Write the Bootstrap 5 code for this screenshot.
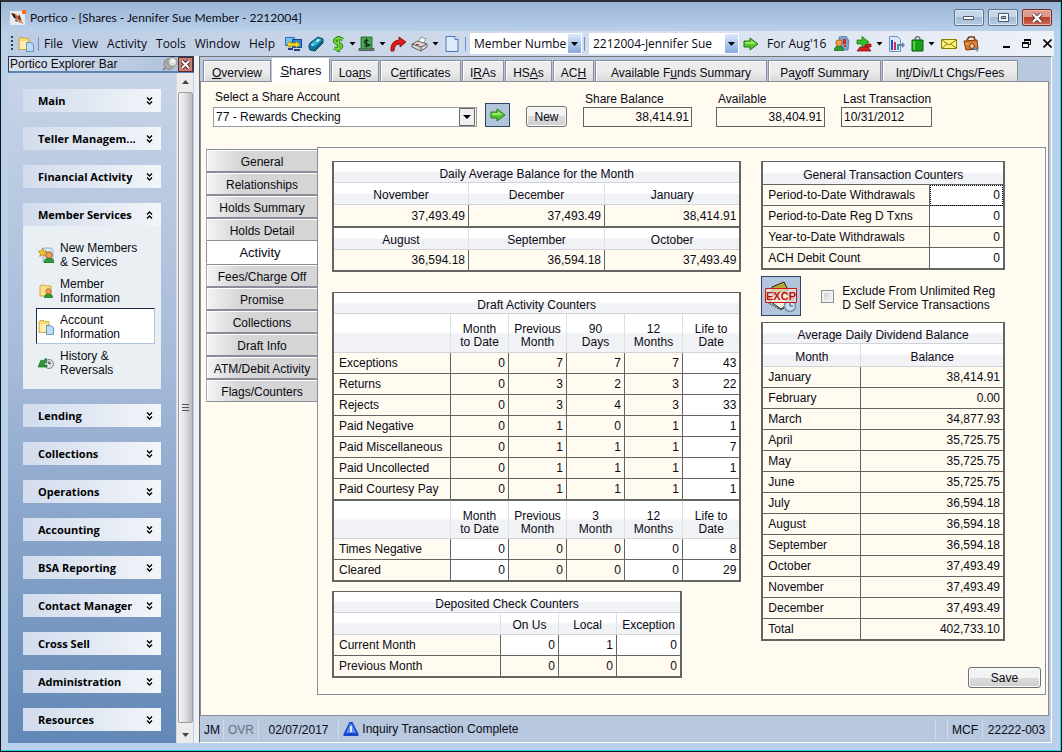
<!DOCTYPE html>
<html lang="en">
<head>
<meta charset="utf-8">
<meta name="viewport" content="width=device-width, initial-scale=1">
<title>Portico - Shares</title>
<link href="https://cdn.jsdelivr.net/npm/bootstrap@5.3.0/dist/css/bootstrap.min.css" rel="stylesheet">
<style>
:root{--ink:#0a0a14;--cream:#fffbf0;--line:#8a8d99;--grid:#646464;--steel:#b7c8df}
body{font:12px/14px "Liberation Sans",Arial,sans-serif;color:var(--ink);background:#b9d1ea}
button,input,select{font:inherit;color:inherit}
svg{display:block;flex:none}
a{color:inherit;text-decoration:none}
.frame{min-height:100vh;border:1px solid #111;border-top:2px solid #2b2f36;box-shadow:inset -1px -1px #2fd0ee;background:linear-gradient(#9ab5d5,#bad1eb 30px,#b9d1ea);padding:0 7px 8px 7px}
.ui{font-family:"Open Sans","Segoe UI",sans-serif}
.titlebar{height:29px;padding:2px 2px 0 2px;font:12px/14px Lato,"Segoe UI",sans-serif}
.capbtn{width:30px;height:17px;border:1px solid #5c7390;border-radius:2px;background:linear-gradient(#c6d7ea 50%,#a3bad3 50%,#b7cde4);box-shadow:inset 0 0 0 1px #dce8f4;padding:0;display:flex;align-items:center;justify-content:center}
.capbtn.shut{background:linear-gradient(#dc9b8c 50%,#b8402c 50%,#cd6b55);border-color:#6e2e2a;box-shadow:inset 0 0 0 1px #e9b5a8}
.toolbar{height:25px;background:linear-gradient(90deg,#bccce4,#d5deed 60%,#eef1f8);padding:0 2px 0 3px}
.toolbar button,.toolbar a{background:none;border:0;padding:0;white-space:nowrap}
.menus{width:231px;margin-left:5px}
.tools{margin-left:10px}
.g6{margin-left:6px}.g2{margin-left:2px}
.acts{gap:6px}
.rule{width:1px;height:14px;background:#6a93cc}
.tsel{height:21px;border:0;border-radius:0;appearance:none;padding:0 4px;background:#fff url("data:image/svg+xml,%3Csvg xmlns='http://www.w3.org/2000/svg' width='15' height='21'%3E%3Cdefs%3E%3ClinearGradient id='g' x2='0' y2='1'%3E%3Cstop stop-color='%23dbe8fa'/%3E%3Cstop offset='1' stop-color='%2386a9e0'/%3E%3C/linearGradient%3E%3C/defs%3E%3Cpath fill='url(%23g)' d='M1 1h13v19H1z'/%3E%3Cpath d='M4 9h7l-3.500 4z'/%3E%3C/svg%3E") right center no-repeat}
.w112{width:112px}.w150{width:150px}
.caret{width:7px}
.side{width:186px;flex:none}
.sidehead{height:17px;border:1px solid #2c3e58;border-bottom:2px solid #5b82b4;background:linear-gradient(90deg,#dbe2ec,#a9bfd9);padding-left:1px;font-size:12px}
.pane{width:168px;background:linear-gradient(#c7d4e8,#a5b9d8 45%,#6288b6);padding:16px 15px 11px;gap:15px}
.grp{width:138px}
.grphead{height:23px;width:100%;border:0;background:linear-gradient(90deg,#d2dced,#f2f5f9);padding:0 8px 0 15px;font:bold 11px/14px "Open Sans",Tahoma,sans-serif;color:#000}
.grpbody{background:#e9eff3;padding:10px 6px 9px 13px}
.grpitem{height:36px;border:1px solid transparent;padding:1px 0 0 1px;gap:6px}
.grpitem.on{background:#fff;border:1px solid #b2c3e0;border-top-color:#1c2b45;border-left-color:#1c2b45}
.sbar{width:17px;background:#ececec;border-left:1px solid #d8dce2}
.thumb{width:15px;border:1px solid #9a9da2;border-radius:2px;background:linear-gradient(90deg,#f5f5f5,#dcdcdf 55%,#b9b9bf)}
.split{width:5px;flex:none;background:#f0f0f0}
.work{border-left:1px solid #6c6c6c;border-top:1px solid #77777a;background:var(--steel);margin-right:2px;border-bottom:1px solid #fff;border-right:1px solid #fff;min-width:0}
.tabs{padding-left:3px;gap:1px;height:25px;position:relative}
.tab{height:21px;border:1px solid var(--line);border-bottom:0;background:linear-gradient(#ececec 50%,#d9d9d9);box-shadow:inset 1px 1px #fff;padding:3px 0 0;margin-bottom:1px;text-align:center;white-space:nowrap}
.tab.on{height:24px;background:#fff;border-top-color:#fff;border-left-color:#fff;padding-top:1px;margin-bottom:0;font-size:13px}
.sheet{background:var(--cream);border:1px solid var(--line);padding:8px 2px 20px 0;margin:-1px 2px 0 0}
.formrow{padding-left:12px}
.lower{padding-top:20px}
.asel{width:264px;height:20px;border:1px solid #9a9a9a;border-radius:0;appearance:none;padding:0 2px;background:#fff url("data:image/svg+xml,%3Csvg xmlns='http://www.w3.org/2000/svg' width='17' height='18'%3E%3Cpath fill='%23f0f0f0' stroke='%23666' d='M.5.5h15v17H.5z'/%3E%3Cpath d='M4 7h8l-4 4z'/%3E%3C/svg%3E") right center no-repeat}
.lbl{height:15px;display:block;padding-left:2px}
.lbl.high{height:17px}
.box{display:block;height:20px;border:1px solid var(--grid);border-radius:0;background:var(--cream);padding:0 2px;text-align:right}
.w109{width:109px}.w91{width:91px}
.btnx{border:1px solid #707070;border-radius:3px;background:linear-gradient(#f3f3f3 50%,#dcdcdc 50%,#cfcfcf);box-shadow:inset 0 0 0 1px #fafafa;padding:1px 0 0;height:21px;font-size:12px;text-align:center}
.sq{border:1px solid #2c4468;background:#b3c5dd;padding:0;display:flex;align-items:center;justify-content:center}
.vtabs{width:111px;margin:2px 0 0 5px}
.vtab{height:23px;width:100%;border:0;border-top:1px solid var(--line);border-bottom:1px solid var(--line);border-left:1px solid #a6a8b2;background:linear-gradient(90deg,#f4f4f4,#d5d5d5 30%);box-shadow:inset 1px 1px #fff;padding:3px 0 0;text-align:center;white-space:nowrap}
.vtab.on{background:#fff;border-color:#fff;border-left-color:var(--line);font-size:13px;padding:0 4px 0 0}
.panelx{border:1px solid var(--line);padding:13px 4px 5px 14px;display:grid;grid-template-columns:minmax(0,430fr) minmax(0,244fr) 36px;grid-template-rows:auto 1fr}
.leftcol{grid-row:1 / span 2;padding-right:20px}
.saverow{grid-column:2 / span 2;margin-top:26px}
table.gridx{width:100%;table-layout:fixed;border-collapse:separate;border-spacing:0;border:2px solid var(--grid);border-top-width:1px;background:var(--cream)}
.gridx th{font-weight:400;text-align:center;height:22px;padding:4px 0 0;background:linear-gradient(#fff 45%,#f0f1f4 55%,#f2f3f6);border-bottom:1px solid #d2d3d7;border-right:1px solid #dfe0e4;line-height:13px}
.gridx .cap th{height:21px}
.gridx .cap.dark th{height:23px;border-bottom-color:var(--grid)}
.gridx .hd th{height:23px}
.gridx .tall th{height:38px;padding-top:6px}
.gridx .tall.first th{height:39px}
.gridx td{height:21px;padding:0 3px 0 0;text-align:right;border-right:1px solid var(--grid);border-bottom:1px solid var(--grid);background:var(--cream);line-height:14px}
.gridx .name{text-align:left;padding-left:5px;white-space:nowrap}
.gridx tr>:last-child{border-right:0}
.gridx tr.mid>*{height:22px;border-bottom:2px solid var(--grid)}
.gridx tbody tr.end>*{height:20px;border-bottom:0}
.gridx td.w{background:#fff}
.gridx td.focus{outline:1px dotted #000;outline-offset:-1px}
.gridx tr.mid>td.v{height:23px}
.c117{width:117px}.c58{width:58px}.c167{width:167px}.c98{width:98px}.c135{width:135px}.c136{width:136px}
.draft{margin:20px 0 9px}
.dep{width:350px}
.excp{margin:6px 0;gap:20px}
.chk{width:13px;height:13px;appearance:none;border:1px solid #8c8f94;background:linear-gradient(135deg,#c9ced3,#f8f8f8);box-shadow:inset 0 0 0 2px #f2f2f2;margin:6px 0 0;flex:none}
.status{height:26px}
.status>span{border-right:1px solid #d3dce8;height:20px;padding-top:4px;white-space:nowrap;flex:none}
.status .msg{border:0;padding:0 0 0 4px;flex:1 1 auto}
</style>
</head>
<body>
<svg width="0" height="0" class="position-absolute" aria-hidden="true">
<symbol id="dn" viewBox="0 0 7 8"><path d="M1 .5l2.500 2.500L6 .5M1 4.500L3.500 7 6 4.500" fill="none" stroke="#000" stroke-width="1.400"/></symbol>
<symbol id="up" viewBox="0 0 7 8"><path d="M1 3.500L3.500 1 6 3.500M1 7.500L3.500 5 6 7.500" fill="none" stroke="#000" stroke-width="1.400"/></symbol>
<symbol id="ct" viewBox="0 0 7 4"><path d="M.5 0h6l-3 3.500z"/></symbol>
<symbol id="folder" viewBox="0 0 16 16"><path d="M1 2.500l1-1h4l1 1h4v4h1v7H1z" fill="#f5d978" stroke="#c79c31" stroke-width=".8"/><path d="M2 5h7v8H2z" fill="#fdeeae"/><path d="M8.500 6.500h4l3 2v7h-7z" fill="#b9dcfa" stroke="#527fae" stroke-width=".8"/></symbol>
<symbol id="go" viewBox="0 0 16 14"><path d="M1 4h6V1l8 6-8 6v-3H1z" fill="#57c52c" stroke="#247a12"/><path d="M2 5h6V3l5 4H2z" fill="#9ae66a"/></symbol>
<symbol id="person" viewBox="0 0 10 12"><path d="M0 12q0-5 5-5t5 5z" fill="#2f9a36" stroke="#14601c" stroke-width=".6"/><circle cx="5" cy="4" r="3.200" fill="#f0a04a" stroke="#8a4a12" stroke-width=".7"/></symbol>
</svg>

<div class="frame d-flex flex-column">
<header class="titlebar d-flex align-items-center">
  <svg width="16" height="16" viewBox="0 0 16 16"><path d="M0 1h15v14H0z" fill="#e8eaec"/><path d="M1 3l4 1 2 5-3-1z" fill="#222"/><path d="M4 3l4 3 2 4 4 4-5-2-3-4z" fill="#d9622b"/><path d="M9 4l3 7-4-3z" fill="#333"/><path d="M6 9l2 3-3-1z" fill="#444"/><path d="M12 0h4v4h-4z" fill="#ff6a1e"/></svg>
  <span class="ms-1">Portico - [Shares - Jennifer Sue Member - 2212004]</span>
  <div class="ms-auto d-flex gap-1">
    <button class="capbtn" aria-label="Minimize"><svg width="12" height="6"><path d="M.5 1.500h10v3H.5z" fill="#fff" stroke="#4a5568"/></svg></button>
    <button class="capbtn" aria-label="Restore"><svg width="11" height="9"><path d="M1.500 1.500h8v6h-8z" fill="none" stroke="#fff" stroke-width="2"/><path d="M.5.5h10v8H.5zM3.500 3.500h4v2h-4z" fill="none" stroke="#4a5568"/></svg></button>
    <button class="capbtn shut" aria-label="Close"><svg width="12" height="10" viewBox="0 0 12 10"><path d="M2 1l8 8M10 1L2 9" stroke="#5b3438" stroke-width="4"/><path d="M2 1l8 8M10 1L2 9" stroke="#fff" stroke-width="2.300"/></svg></button>
  </div>
</header>

<nav class="toolbar d-flex align-items-center ui" aria-label="Main menu">
  <svg width="3" height="15"><path d="M0 0h2v2H0zM0 4h2v2H0zM0 8h2v2H0zM0 12h2v2H0z" fill="#2b3f63"/></svg>
  <svg class="ms-1" width="16" height="16"><use href="#folder"/></svg>
  <span class="rule ms-1"></span>
  <div class="menus d-flex justify-content-between"><a href="#">File</a><a href="#">View</a><a href="#">Activity</a><a href="#">Tools</a><a href="#">Window</a><a href="#">Help</a></div>
  <div class="tools d-flex align-items-center">
    <button aria-label="Computers"><svg width="17" height="16" viewBox="0 0 17 16"><path d="M.5 1.500h9v8h-9z" fill="#6cc6f5" stroke="#2b6cb8"/><path d="M7.500 3.500h9v8h-9z" fill="#2d86dc" stroke="#17418d"/><path d="M3 12h5v2H3zM9 13h6v2H9z" fill="#27407c"/><path d="M2 8l3-3v2h6V5l4 3.500L11 12v-2H5v2z" fill="#f7d720" stroke="#9b7b00" stroke-width=".6"/></svg></button>
    <button class="g6" aria-label="Scanner"><svg width="16" height="16" viewBox="0 0 16 16"><path d="M.8 10.500L2 7l8-6 5 2v4l-8 8-5-1z" fill="#1578a0" stroke="#0b4660"/><path d="M2 8.500L10 2l3.500 1.500L7 10z" fill="#35b4d8"/><path d="M8 5l2-2 2 1-2 2zM3 9l2-1 1 1-2 1z" fill="#c9f1fa"/><path d="M6 14l8-8" stroke="#0b4660"/></svg></button>
    <button class="ms-2 d-flex align-items-center gap-1" aria-label="Money"><svg width="13" height="16" viewBox="0 0 13 16"><path d="M11 3.500Q6 1 3.500 3.500T6 7.500t3 4T2 12M6.500 0v16" fill="none" stroke="#2b8a0c" stroke-width="3.400"/><path d="M11 3.500Q6 1 3.500 3.500T6 7.500t3 4T2 12M6.500 1v14" fill="none" stroke="#7ad83c" stroke-width="1.600"/></svg><svg class="caret" height="4"><use href="#ct"/></svg></button>
    <button class="g2 d-flex align-items-center gap-1" aria-label="Cash"><svg width="17" height="16" viewBox="0 0 17 16"><path d="M1 12.500h15v2H1z" fill="#8d9499" stroke="#333" stroke-width=".7"/><path d="M3 1h11v12H3z" fill="#4aa653" stroke="#1d5a26" stroke-width=".8"/><path d="M10.500 4.500Q6.500 3.500 6.500 5.500t4 3-4 1.500M8.500 2.500v9" fill="none" stroke="#0c2c10" stroke-width="1.200"/></svg><svg class="caret" height="4"><use href="#ct"/></svg></button>
    <button class="ms-1" aria-label="Forward"><svg width="17" height="16" viewBox="0 0 17 16"><path d="M1 15Q0 5 9 4V1l7 5-6 5V8Q4 8 4 15z" fill="#e01818" stroke="#7d0808" stroke-width=".8"/></svg></button>
    <button class="ms-1 d-flex align-items-center gap-1" aria-label="Print"><svg width="17" height="16" viewBox="0 0 17 16"><path d="M7 6l3-5 5 2-3 5z" fill="#fff" stroke="#666" stroke-width=".7"/><path d="M1 8l6-3 9 3v3l-6 4-9-4z" fill="#d8d8d8" stroke="#444" stroke-width=".8"/><path d="M1 8l9 3v4M10 11l6-3" stroke="#555" fill="none"/><path d="M5 8h3v1H5z" fill="#e02020"/></svg><svg class="caret" height="4"><use href="#ct"/></svg></button>
    <button class="g6" aria-label="New document"><svg width="14" height="16" viewBox="0 0 14 16"><path d="M1 .5h9l3 3v12H1z" fill="#dcecfd" stroke="#4a78b5"/><path d="M10 .5v3h3" fill="#fff" stroke="#4a78b5"/></svg></button>
  </div>
  <span class="rule g6 me-1"></span>
  <select class="tsel w112" aria-label="Search by"><option>Member Numbe</option></select>
  <span class="rule g2 me-1"></span>
  <select class="tsel w150" aria-label="Member"><option>2212004-Jennifer Sue</option></select>
  <button class="ms-1 d-flex align-items-center gap-2"><svg width="16" height="14"><use href="#go"/></svg>For Aug'16</button>
  <div class="acts d-flex align-items-center ms-auto">
    <button aria-label="Member notes"><svg width="16" height="16" viewBox="0 0 16 16"><path d="M5 1l7-1 3 5-1 9H7z" fill="#7aa7cf" stroke="#476c94" stroke-width=".7"/><path d="M9 3h3v5H9zM10 9h2v2h-2z" fill="#d82424"/><use href="#person" x="0" y="3" width="10" height="12"/></svg></button>
    <button class="d-flex align-items-center gap-1" aria-label="Transfer"><svg width="16" height="16" viewBox="0 0 16 16"><path d="M1 15l3-4h8l3 4z" fill="#d82020" stroke="#7a0c0c" stroke-width=".7"/><path d="M7 8h8v3H9z" fill="#d82020" stroke="#7a0c0c" stroke-width=".7"/><path d="M1 4h5V.5L13 6l-7 5.500V8H1z" fill="#35c128" stroke="#116a10" stroke-width=".7"/></svg><svg class="caret" height="4"><use href="#ct"/></svg></button>
    <button aria-label="Reports"><svg width="16" height="16" viewBox="0 0 16 16"><path d="M.5.5h8l3 3v12H.5z" fill="#d8e8fa" stroke="#6d93c4"/><path d="M2 4h2v10H2z" fill="#2849c8"/><path d="M5 6h2v8H5z" fill="#d82860"/><path d="M8 8h2v6H8z" fill="#28a0a0"/><path d="M10 8h3V6l3 3-3 3v-2h-3z" fill="#6c7fa8"/></svg></button>
    <button class="d-flex align-items-center gap-1" aria-label="Deposit bag"><svg width="13" height="16" viewBox="0 0 13 16"><path d="M4 4Q4 .5 6.500.5T9 4" fill="none" stroke="#777" stroke-width="1.500"/><path d="M1 4h11v11H1z" fill="#18a018" stroke="#0a5a0a"/><path d="M2 5h2v9H2z" fill="#55cf45"/></svg><svg class="caret" height="4"><use href="#ct"/></svg></button>
    <button aria-label="Mail"><svg width="16" height="12" viewBox="0 0 16 12"><path d="M.5 1.500h15v9H.5z" fill="#fff27c" stroke="#8a7a00"/><path d="M1 2l7 5 7-5M1 10l5-4M15 10l-5-4" fill="none" stroke="#8a7a00"/></svg></button>
    <button aria-label="Briefcase"><svg width="16" height="16" viewBox="0 0 16 16"><path d="M4 4l2-3h5l1 3" fill="none" stroke="#7a3c08" stroke-width="1.600"/><path d="M1 5l13-1 1 9-12 1z" fill="#d8782a" stroke="#7a3c08"/><path d="M2 8h12" stroke="#f4b068"/><circle cx="9" cy="10" r="2.500" fill="#f4c48c" stroke="#7a3c08"/><path d="M11 12l4 3" stroke="#4c9ae0" stroke-width="2"/></svg></button>
  </div>
  <div class="d-flex align-items-center gap-2 ms-4">
    <button aria-label="Minimize sheet"><svg width="7" height="10"><path d="M0 7h7v2H0z"/></svg></button>
    <button class="ms-1" aria-label="Restore sheet"><svg width="9" height="9"><path d="M2.500 2.500v-2h6v5h-2M.5 3.500h6v5h-6z" fill="none" stroke="#000"/><path d="M2 0h7v2H2zM0 3h7v2H0z"/></svg></button>
    <button class="ms-1" aria-label="Close sheet"><svg width="9" height="9"><path d="M.5.5l8 8M8.500.5l-8 8" stroke="#000" stroke-width="1.600"/></svg></button>
  </div>
</nav>

<div class="d-flex flex-grow-1">
<aside class="side d-flex flex-column">
  <div class="sidehead d-flex align-items-center">Portico Explorer Bar
    <svg class="ms-auto" width="16" height="14" viewBox="0 0 16 14"><path d="M1 13l5-5" stroke="#777" stroke-width="1.500"/><ellipse cx="7" cy="7" rx="5" ry="5.500" fill="#aaa" stroke="#888"/><circle cx="10.500" cy="5" r="4.500" fill="#d9d9d9" stroke="#8d8d8d"/><circle cx="11" cy="4" r="2" fill="#f6f6f6"/></svg>
    <svg width="15" height="15" viewBox="0 0 15 15"><path d="M.5.5h14v14H.5z" fill="#c98078" stroke="#5c2a2a"/><path d="M4 4l7 7M11 4l-7 7" stroke="#50282c" stroke-width="4"/><path d="M4 4l7 7M11 4l-7 7" stroke="#fff" stroke-width="2"/></svg>
  </div>
  <div class="d-flex flex-grow-1">
    <div class="pane d-flex flex-column">
      <div class="grp"><button class="grphead d-flex align-items-center justify-content-between">Main<svg width="7" height="8"><use href="#dn"/></svg></button></div>
      <div class="grp"><button class="grphead d-flex align-items-center justify-content-between">Teller Managem...<svg width="7" height="8"><use href="#dn"/></svg></button></div>
      <div class="grp"><button class="grphead d-flex align-items-center justify-content-between">Financial Activity<svg width="7" height="8"><use href="#dn"/></svg></button></div>
      <div class="grp"><button class="grphead d-flex align-items-center justify-content-between">Member Services<svg width="7" height="8"><use href="#up"/></svg></button>
        <div class="grpbody">
          <a href="#" class="grpitem d-flex align-items-center"><svg width="16" height="16" viewBox="0 0 16 16"><path d="M5 1h8l2 2v12H5z" fill="#d6e6f8" stroke="#7d9cc4" stroke-width=".7"/><use href="#person" x="6" y="4" width="10" height="12"/><path d="M4.500 1l1.300 3 3.200.3-2.500 2 .8 3.200-2.800-1.700L1.700 9.500l.8-3.200L0 4.300 3.200 4z" fill="#fbc52c" stroke="#a87400" stroke-width=".6"/></svg><span>New Members<br>&amp; Services</span></a>
          <a href="#" class="grpitem d-flex align-items-center"><svg width="16" height="16" viewBox="0 0 16 16"><path d="M2 3l1-1h4l1 1h5v10H2z" fill="#f9e08a" stroke="#c79c31" stroke-width=".8"/><use href="#person" x="6" y="5" width="9" height="10"/></svg><span>Member<br>Information</span></a>
          <a href="#" class="grpitem on d-flex align-items-center"><svg width="16" height="16"><use href="#folder"/></svg><span>Account<br>Information</span></a>
          <a href="#" class="grpitem d-flex align-items-center"><svg width="16" height="16" viewBox="0 0 16 16"><circle cx="11" cy="9" r="4.500" fill="#dfe6ea" stroke="#788490"/><path d="M11 6v3l2-1" fill="none" stroke="#333"/><path d="M0 12l3-7 2 1 3-3 1 5-2-1-2 3h4v2z" fill="#2c9a34" stroke="#126018" stroke-width=".6"/></svg><span>History &amp;<br>Reversals</span></a>
        </div></div>
      <div class="grp"><button class="grphead d-flex align-items-center justify-content-between">Lending<svg width="7" height="8"><use href="#dn"/></svg></button></div>
      <div class="grp"><button class="grphead d-flex align-items-center justify-content-between">Collections<svg width="7" height="8"><use href="#dn"/></svg></button></div>
      <div class="grp"><button class="grphead d-flex align-items-center justify-content-between">Operations<svg width="7" height="8"><use href="#dn"/></svg></button></div>
      <div class="grp"><button class="grphead d-flex align-items-center justify-content-between">Accounting<svg width="7" height="8"><use href="#dn"/></svg></button></div>
      <div class="grp"><button class="grphead d-flex align-items-center justify-content-between">BSA Reporting<svg width="7" height="8"><use href="#dn"/></svg></button></div>
      <div class="grp"><button class="grphead d-flex align-items-center justify-content-between">Contact Manager<svg width="7" height="8"><use href="#dn"/></svg></button></div>
      <div class="grp"><button class="grphead d-flex align-items-center justify-content-between">Cross Sell<svg width="7" height="8"><use href="#dn"/></svg></button></div>
      <div class="grp"><button class="grphead d-flex align-items-center justify-content-between">Administration<svg width="7" height="8"><use href="#dn"/></svg></button></div>
      <div class="grp"><button class="grphead d-flex align-items-center justify-content-between">Resources<svg width="7" height="8"><use href="#dn"/></svg></button></div>
    </div>
    <div class="sbar d-flex flex-column align-items-center">
      <svg width="7" height="19"><path d="M0 11h7l-3.500-4z" fill="#444"/></svg>
      <div class="thumb flex-grow-1 d-flex align-items-center justify-content-center"><svg width="7" height="8"><path d="M0 .5h7M0 3.500h7M0 6.500h7" stroke="#555"/></svg></div>
      <svg width="7" height="20"><path d="M0 10h7l-3.500 4z" fill="#444"/></svg>
    </div>
  </div>
</aside>
<div class="split"></div>

<main class="work flex-grow-1 d-flex flex-column">
  <div class="tabs d-flex align-items-end" role="tablist">
    <button class="tab" role="tab" style="width:68px"><u>O</u>verview</button>
    <button class="tab on" role="tab" style="width:58px"><u>S</u>hares</button>
    <button class="tab" role="tab" style="width:48px">Loa<u>n</u>s</button>
    <button class="tab" role="tab" style="width:81px">C<u>e</u>rtificates</button>
    <button class="tab" role="tab" style="width:42px">I<u>R</u>As</button>
    <button class="tab" role="tab" style="width:47px">HS<u>A</u>s</button>
    <button class="tab" role="tab" style="width:41px">AC<u>H</u></button>
    <button class="tab" role="tab" style="width:172px">Available F<u>u</u>nds Summary</button>
    <button class="tab" role="tab" style="width:113px">Pa<u>y</u>off Summary</button>
    <button class="tab" role="tab" style="width:136px">In<u>t</u>/Div/Lt Chgs/Fees</button>
  </div>
  <div class="sheet flex-grow-1 d-flex flex-column">
    <div class="formrow d-flex align-items-end">
      <div><label class="lbl high" for="acct">Select a Share Account</label><select id="acct" class="asel"><option>77 - Rewards Checking</option></select></div>
      <button class="sq ms-2" style="width:25px;height:24px" aria-label="Go"><svg width="16" height="14"><use href="#go"/></svg></button>
      <button class="btnx ms-3" style="width:41px">New</button>
      <div class="ms-3"><label class="lbl" for="bal">Share Balance</label><input id="bal" class="box w109" value="38,414.91" readonly></div>
      <div class="ms-4"><label class="lbl" for="avl">Available</label><input id="avl" class="box w109" value="38,404.91" readonly></div>
      <div class="ms-3"><label class="lbl text-nowrap" for="lst">Last Transaction</label><input id="lst" class="box w91 text-start" value="10/31/2012" readonly></div>
    </div>
    <div class="lower d-flex flex-grow-1">
      <div class="vtabs flex-shrink-0">
        <button class="vtab">General</button><button class="vtab">Relationships</button><button class="vtab">Holds Summary</button><button class="vtab">Holds Detail</button><button class="vtab on">Activity</button><button class="vtab">Fees/Charge Off</button><button class="vtab">Promise</button><button class="vtab">Collections</button><button class="vtab">Draft Info</button><button class="vtab">ATM/Debit Activity</button><button class="vtab">Flags/Counters</button>
      </div>
      <section class="panelx flex-grow-1">
        <div class="leftcol">
          <table class="gridx"><colgroup><col class="c135"><col class="c136"><col></colgroup>
            <tbody>
            <tr class="cap"><th colspan="3">Daily Average Balance for the Month</th></tr>
            <tr><th>November</th><th>December</th><th>January</th></tr>
            <tr class="mid"><td class="v">37,493.49</td><td class="v">37,493.49</td><td class="v">38,414.91</td></tr>
            <tr><th>August</th><th>September</th><th>October</th></tr>
            <tr class="end"><td>36,594.18</td><td>36,594.18</td><td>37,493.49</td></tr>
            </tbody></table>
          <table class="gridx draft"><colgroup><col class="c117"><col class="c58"><col class="c58"><col class="c58"><col class="c58"><col></colgroup>
            <tbody>
            <tr class="cap"><th colspan="6">Draft Activity Counters</th></tr>
            <tr class="tall first"><th></th><th>Month<br>to Date</th><th>Previous<br>Month</th><th>90<br>Days</th><th>12<br>Months</th><th>Life to<br>Date</th></tr>
            <tr><td class="name">Exceptions</td><td>0</td><td>7</td><td>7</td><td>7</td><td class="w">43</td></tr>
            <tr><td class="name">Returns</td><td>0</td><td>3</td><td>2</td><td>3</td><td class="w">22</td></tr>
            <tr><td class="name">Rejects</td><td>0</td><td>3</td><td>4</td><td>3</td><td class="w">33</td></tr>
            <tr><td class="name">Paid Negative</td><td>0</td><td>1</td><td>0</td><td>1</td><td class="w">1</td></tr>
            <tr><td class="name">Paid Miscellaneous</td><td>0</td><td>1</td><td>1</td><td>1</td><td class="w">7</td></tr>
            <tr><td class="name">Paid Uncollected</td><td>0</td><td>1</td><td>1</td><td>1</td><td class="w">1</td></tr>
            <tr class="mid"><td class="name">Paid Courtesy Pay</td><td>0</td><td>1</td><td>1</td><td>1</td><td class="w">1</td></tr>
            <tr class="tall"><th></th><th>Month<br>to Date</th><th>Previous<br>Month</th><th>3<br>Month</th><th>12<br>Months</th><th>Life to<br>Date</th></tr>
            <tr><td class="name">Times Negative</td><td class="w">0</td><td>0</td><td>0</td><td class="w">0</td><td class="w">8</td></tr>
            <tr class="end"><td class="name">Cleared</td><td class="w">0</td><td>0</td><td>0</td><td class="w">0</td><td class="w">29</td></tr>
            </tbody></table>
          <div class="dep"><table class="gridx"><colgroup><col class="c167"><col class="c58"><col class="c58"><col></colgroup>
            <tbody>
            <tr class="cap"><th colspan="4">Deposited Check Counters</th></tr>
            <tr><th></th><th>On Us</th><th>Local</th><th>Exception</th></tr>
            <tr><td class="name">Current Month</td><td class="w">0</td><td class="w">1</td><td class="w">0</td></tr>
            <tr class="end"><td class="name">Previous Month</td><td>0</td><td>0</td><td>0</td></tr>
            </tbody></table></div>
        </div>
        <div>
          <table class="gridx"><colgroup><col class="c167"><col></colgroup>
            <tbody>
            <tr class="cap dark"><th colspan="2">General Transaction Counters</th></tr>
            <tr><td class="name">Period-to-Date Withdrawals</td><td class="w focus">0</td></tr>
            <tr><td class="name">Period-to-Date Reg D Txns</td><td class="w">0</td></tr>
            <tr><td class="name">Year-to-Date Withdrawals</td><td>0</td></tr>
            <tr class="end"><td class="name">ACH Debit Count</td><td class="w">0</td></tr>
            </tbody></table>
          <div class="d-flex excp">
            <button class="sq" style="width:40px;height:40px" aria-label="Exceptions"><svg width="34" height="34" viewBox="0 0 34 34"><path d="M8 8l12-5 4 8-14 6z" fill="#b8a832" stroke="#222"/><path d="M3 20l14-8 13 8-13 10z" fill="#f2efdc" stroke="#222"/><path d="M3 23l14 8 10-6" fill="none" stroke="#222" stroke-dasharray="2 1"/><circle cx="26" cy="27" r="5.500" fill="#c8e0f4" stroke="#7a8ea6" stroke-width="1.500"/><path d="M26 24v3h3" fill="none" stroke="#456"/><path d="M1.500 9.500h31v14h-31z" fill="#f4ead4" fill-opacity=".7" stroke="#c81818"/><text x="17" y="21" font-family="Liberation Sans" font-weight="bold" font-size="11" fill="#c01010" text-anchor="middle">EXCP</text></svg></button>
            <div class="d-flex pt-2 gap-2"><input class="chk" type="checkbox" id="exc"><label for="exc" class="text-nowrap">Exclude From Unlimited Reg<br>D Self Service Transactions</label></div>
          </div>
          <table class="gridx"><colgroup><col class="c98"><col></colgroup>
            <tbody>
            <tr class="cap"><th colspan="2">Average Daily Dividend Balance</th></tr>
            <tr class="hd"><th>Month</th><th>Balance</th></tr>
            <tr><td class="name">January</td><td>38,414.91</td></tr>
            <tr><td class="name">February</td><td>0.00</td></tr>
            <tr><td class="name">March</td><td>34,877.93</td></tr>
            <tr><td class="name">April</td><td>35,725.75</td></tr>
            <tr><td class="name">May</td><td>35,725.75</td></tr>
            <tr><td class="name">June</td><td>35,725.75</td></tr>
            <tr><td class="name">July</td><td>36,594.18</td></tr>
            <tr><td class="name">August</td><td>36,594.18</td></tr>
            <tr><td class="name">September</td><td>36,594.18</td></tr>
            <tr><td class="name">October</td><td>37,493.49</td></tr>
            <tr><td class="name">November</td><td>37,493.49</td></tr>
            <tr><td class="name">December</td><td>37,493.49</td></tr>
            <tr class="end"><td class="name">Total</td><td>402,733.10</td></tr>
            </tbody></table>
        </div>
        <div class="saverow text-end"><button class="btnx" style="width:73px">Save</button></div>
      </section>
    </div>
  </div>
  <footer class="status d-flex align-items-center">
    <span class="ps-1" style="width:24px">JM</span>
    <span class="text-center text-secondary" style="width:35px">OVR</span>
    <span class="text-center" style="width:80px">02/07/2017</span>
    <span class="msg d-flex align-items-center"><svg width="16" height="16" viewBox="0 0 16 16"><path d="M6.500 1h3L15.500 13v2H.5v-2z" fill="#1c46c8"/><path d="M7 3h2l4 9H3z" fill="#5a8cf4"/><path d="M8 5v6" stroke="#fff" stroke-width="1.600"/></svg>&nbsp;Inquiry Transaction Complete</span>
    <span style="width:1px"></span><span style="width:12px"></span>
    <span class="text-center" style="width:35px">MCF</span>
    <span class="text-center" style="width:68px">22222-003</span>
  </footer>
</main>
</div>
</div>
<script src="https://cdn.jsdelivr.net/npm/bootstrap@5.3.0/dist/js/bootstrap.bundle.min.js"></script>
</body>
</html>
